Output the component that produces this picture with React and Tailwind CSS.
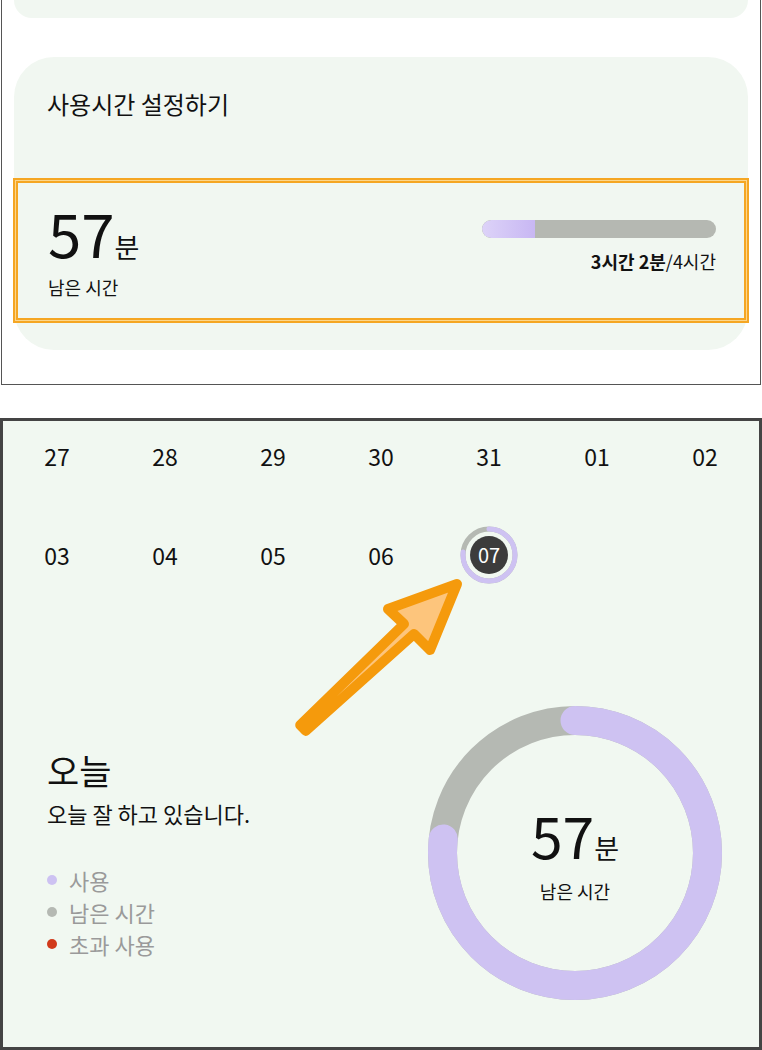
import React from "react";

const FONT = { fontFamily: '"Noto Sans CJK KR", "Noto Sans", sans-serif' };

const row1 = ["27", "28", "29", "30", "31", "01", "02"];
const row2 = ["03", "04", "05", "06"];

function Ring({ size, r, width, purpleLen }) {
    const c = 2 * Math.PI * r;
    const half = size / 2;
    return (
        <svg width={size} height={size} viewBox={`0 0 ${size} ${size}`} className="block">
            <circle cx={half} cy={half} r={r} fill="none" stroke="#b5b9b3" strokeWidth={width} />
            <circle
                cx={half}
                cy={half}
                r={r}
                fill="none"
                stroke="#cec2f2"
                strokeWidth={width}
                strokeLinecap="round"
                strokeDasharray={`${(purpleLen / 360) * c} ${c}`}
                transform={`rotate(-90 ${half} ${half})`}
            />
        </svg>
    );
}

function TodayDot() {
    return (
        <div className="relative w-[58px] h-[58px]">
            <Ring size={58} r={26} width={5} purpleLen={275} />
            <div className="absolute inset-0 flex items-center justify-center">
                <div className="w-[38px] h-[38px] rounded-full bg-[#3c3c3c] flex items-center justify-center text-white text-[20px] leading-none">
                    07
                </div>
            </div>
        </div>
    );
}

// annotation arrow drawn over the screenshot
function Arrow() {
    return (
        <svg className="absolute left-0 top-0 pointer-events-none" width="762" height="1050" viewBox="0 0 762 1050">
            <polygon
                points="457,584 430,650 414,634 305.8,730.9 300.2,725.1 404,624 388,609"
                fill="#fdc57c"
                stroke="#f59a0c"
                strokeWidth="10"
                strokeLinejoin="round"
            />
        </svg>
    );
}

export default function App() {
    return (
        <div className="relative w-[762px] h-[1050px] bg-white overflow-hidden text-[#111]" style={FONT}>
            {/* top screenshot */}
            <div className="mx-[1px] h-[385px] border-x border-b border-[#555] bg-white">
                <div className="mx-[12px] h-[18px] rounded-b-[36px] bg-[#f1f7f1]" />
                <div className="mt-[39px] mx-[12px] h-[293px] rounded-[40px] bg-[#f1f7f1]">
                    <div className="pt-[32px] pl-[33px] text-[24px] leading-[30px]">사용시간 설정하기</div>
                    <div className="mt-[59px] -mx-[1px] h-[145px] border-[2px] border-[#f5a623] bg-[#fcd68c] p-[1px]">
                        <div className="h-full border-[2px] border-[#f5a623] bg-[#f1f7f1] flex justify-between pl-[30px] pr-[28px]">
                            <div className="pt-[14px]">
                                <div className="flex items-baseline">
                                    <span className="text-[60px] leading-[70px]">57</span>
                                    <span className="text-[27px]">분</span>
                                </div>
                                <div className="mt-[8px] text-[18px] leading-[22px]">남은 시간</div>
                            </div>
                            <div className="pt-[37px] flex flex-col items-end">
                                <div className="w-[234px] h-[18px] rounded-full bg-[#b5b8b2] overflow-hidden">
                                    <div className="h-full w-[53px] rounded-l-full bg-gradient-to-r from-[#ddd3f8] to-[#c8b7f3]" />
                                </div>
                                <div className="mt-[12px] text-[18px] leading-[22px]">
                                    <span className="font-bold">3시간 2분</span>/4시간
                                </div>
                            </div>
                        </div>
                    </div>
                </div>
            </div>

            {/* bottom screenshot */}
            <div className="mt-[33px] h-[632px] border-[3px] border-[#444] bg-[#f1f8f1]">
                <div className="pt-[15px] grid grid-cols-7 text-[23px]">
                    {row1.map((d) => (
                        <div key={d} className="h-[40px] flex items-center justify-center">{d}</div>
                    ))}
                </div>
                <div className="mt-[59px] grid grid-cols-7 text-[23px]">
                    {row2.map((d) => (
                        <div key={d} className="h-[40px] flex items-center justify-center">{d}</div>
                    ))}
                    <div className="h-[40px] flex items-center justify-center">
                        <TodayDot />
                    </div>
                </div>

                <div className="mt-[131px] flex justify-between pr-[37px]">
                    <div className="pl-[44px] pt-[44px]">
                        <div className="text-[35px] leading-[40px]">오늘</div>
                        <div className="mt-[9px] text-[22px] leading-[28px]">오늘 잘 하고 있습니다.</div>
                        <div className="mt-[37px] flex flex-col text-[22px] leading-[32px] text-[#9a9a9a]">
                            <div className="flex items-center gap-[12px]">
                                <span className="w-[10px] h-[10px] rounded-full bg-[#cdc2f2]" />사용
                            </div>
                            <div className="flex items-center gap-[12px]">
                                <span className="w-[10px] h-[10px] rounded-full bg-[#b5b9b3]" />남은 시간
                            </div>
                            <div className="flex items-center gap-[12px]">
                                <span className="w-[10px] h-[10px] rounded-full bg-[#d13a1b]" />초과 사용
                            </div>
                        </div>
                    </div>
                    <div className="relative w-[294px] h-[294px]">
                        <Ring size={294} r={132.5} width={29} purpleLen={276} />
                        <div className="absolute inset-0 flex flex-col items-center justify-center">
                            <div className="flex items-baseline">
                                <span className="text-[57px] leading-[60px]">57</span>
                                <span className="text-[27px]">분</span>
                            </div>
                            <div className="mt-[12px] text-[18px] leading-[22px]">남은 시간</div>
                        </div>
                    </div>
                </div>
            </div>

            <Arrow />
        </div>
    );
}
